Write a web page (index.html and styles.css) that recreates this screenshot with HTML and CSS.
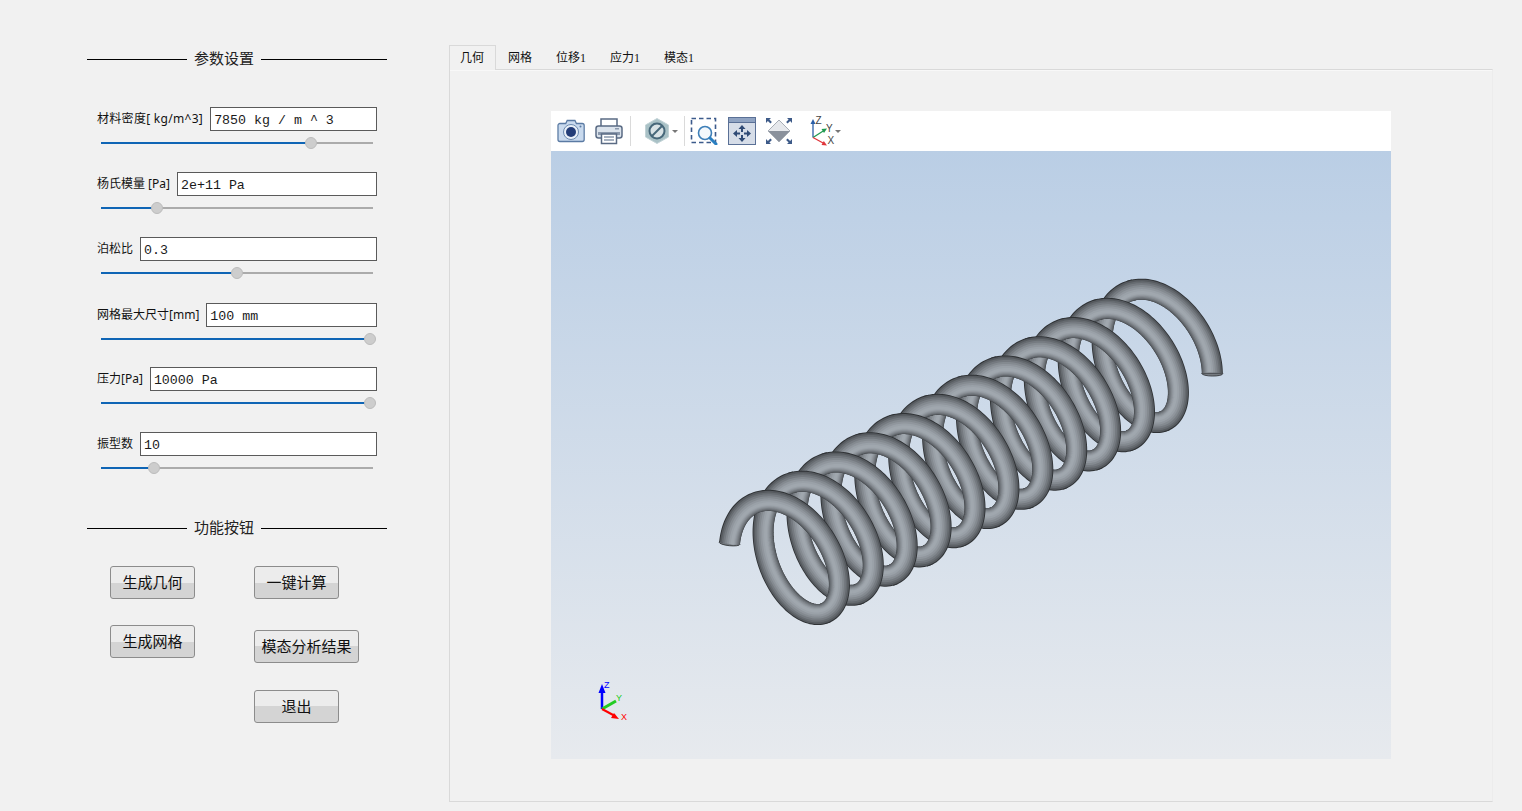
FILE: index.html
```html
<!DOCTYPE html>
<html lang="zh">
<head>
    <meta charset="UTF-8">
    <title>弹簧分析</title>
    <link rel="stylesheet" href="styles.css">
</head>
<body>
    <div class="app">
        <aside class="sidebar">
            <div class="section-title"><span>参数设置</span></div>

            <div class="param-list">
                <div class="param">
                    <div class="param-row">
                        <label class="density">材料密度[ kg/m^3]</label>
                        <div class="field">7850 kg / m ^ 3</div>
                    </div>
                    <div class="slider"><div class="slider-fill" style="width: 77.2%"></div><div class="slider-thumb" style="left: 77.2%"></div></div>
                </div>
                <div class="param">
                    <div class="param-row">
                        <label>杨氏模量 [Pa]</label>
                        <div class="field">2e+11 Pa</div>
                    </div>
                    <div class="slider"><div class="slider-fill" style="width: 20.6%"></div><div class="slider-thumb" style="left: 20.6%"></div></div>
                </div>
                <div class="param">
                    <div class="param-row">
                        <label>泊松比</label>
                        <div class="field">0.3</div>
                    </div>
                    <div class="slider"><div class="slider-fill" style="width: 50%"></div><div class="slider-thumb" style="left: 50%"></div></div>
                </div>
                <div class="param nudge">
                    <div class="param-row">
                        <label>网格最大尺寸[mm]</label>
                        <div class="field">100 mm</div>
                    </div>
                    <div class="slider"><div class="slider-fill" style="width: 99%"></div><div class="slider-thumb" style="left: 99%"></div></div>
                </div>
                <div class="param">
                    <div class="param-row">
                        <label>压力[Pa]</label>
                        <div class="field">10000 Pa</div>
                    </div>
                    <div class="slider"><div class="slider-fill" style="width: 99%"></div><div class="slider-thumb" style="left: 99%"></div></div>
                </div>
                <div class="param">
                    <div class="param-row">
                        <label>振型数</label>
                        <div class="field">10</div>
                    </div>
                    <div class="slider"><div class="slider-fill" style="width: 19.5%"></div><div class="slider-thumb" style="left: 19.5%"></div></div>
                </div>
            </div>

            <div class="section-title section-buttons"><span>功能按钮</span></div>

            <div class="button-grid">
                <div class="button-col first">
                    <button>生成几何</button>
                    <button>生成网格</button>
                </div>
                <div class="button-col second">
                    <button>一键计算</button>
                    <button class="wide">模态分析结果</button>
                    <button class="exit">退出</button>
                </div>
            </div>
        </aside>

        <main class="workspace">
            <div class="tabs">
                <div class="tab active">几何</div>
                <div class="tab">网格</div>
                <div class="tab">位移1</div>
                <div class="tab">应力1</div>
                <div class="tab">模态1</div>
            </div>
            <div class="tab-pane">
                <div class="viewer">
                    <div class="toolbar">
                        <!-- camera -->
                        <svg class="tool" width="28" height="24" viewBox="0 0 28 24">
                            <path d="M2.5 4.5h6l1.5-3h8l1.500 3h6a2 2 0 0 1 2 2v14a2 2 0 0 1-2 2h-23a2 2 0 0 1-2-2v-14a2 2 0 0 1 2-2z" transform="translate(.5 0) scale(.97 1)" fill="#c9daee" stroke="#5a7aa3" stroke-width="1.300"/>
                            <circle cx="14" cy="13" r="7.500" fill="#e9f0f8" stroke="#6d8bb0"/>
                            <circle cx="14" cy="13" r="5" fill="#233d78"/>
                            <circle cx="23.500" cy="7.500" r="1" fill="#5a7aa3"/>
                        </svg>
                        <!-- printer -->
                        <svg class="tool printer" width="28" height="28" viewBox="0 0 28 28">
                            <path d="M6 9V2h16v7" fill="#fff" stroke="#5a6b84" stroke-width="1.500"/>
                            <rect x="1" y="9" width="26" height="12" rx="2.500" fill="#dbe3ec" stroke="#5a6b84" stroke-width="1.500"/>
                            <rect x="3" y="15" width="22" height="3" fill="#8b99ad"/>
                            <rect x="20" y="11" width="4" height="1.500" fill="#8b99ad"/>
                            <rect x="6.500" y="17" width="15" height="9.500" fill="#fff" stroke="#5a6b84" stroke-width="1.500"/>
                            <path d="M9 20h10M9 23h10" stroke="#8b99ad" stroke-width="1.500"/>
                        </svg>
                        <div class="tool-sep first-sep"></div>
                        <!-- display style -->
                        <svg class="tool hex" width="24" height="26" viewBox="0 0 24 26">
                            <path d="M12 .5L23.500 7v12L12 25.500.5 19V7z" fill="#a9c1c6" stroke="#c2d3d6"/>
                            <circle cx="12" cy="13" r="7.500" fill="#d9e3e6" stroke="#47687a" stroke-width="2"/>
                            <path d="M7 18L17 8" stroke="#47687a" stroke-width="2"/>
                        </svg>
                        <span class="caret"></span>
                        <div class="tool-sep"></div>
                        <!-- zoom box -->
                        <svg class="tool zoom-box" width="28" height="28" viewBox="0 0 28 28">
                            <rect x="1.500" y="1.500" width="24" height="24" fill="none" stroke="#3c5b8c" stroke-width="1.600" stroke-dasharray="4.500 3"/>
                            <circle cx="15" cy="16" r="6.500" fill="#f3f8fc" stroke="#3e7fb8" stroke-width="1.600"/>
                            <path d="M20 21l6 6" stroke="#2a7fc1" stroke-width="3" stroke-linecap="round"/>
                        </svg>
                        <!-- pan -->
                        <svg class="tool pan" width="28" height="28" viewBox="0 0 28 28">
                            <rect x=".5" y=".5" width="27" height="27" fill="#d6dde8" stroke="#5a7096"/>
                            <rect x="1" y="1" width="26" height="4" fill="#8fa3c2"/>
                            <path d="M1 5.500h26" stroke="#5a7096"/>
                            <path d="M14 8l-3.500 4H13v3h2v-3h2.500zM14 25l-3.500-4H13v-3h2v3h2.500zM5 16.500L9 13v2.500h3v2H9V20zM23 16.500L19 13v2.500h-3v2h3V20z" fill="#2f4a75"/>
                        </svg>
                        <!-- fit all -->
                        <svg class="tool fit" width="28" height="28" viewBox="0 0 28 28">
                            <path d="M14 3L25 14H3z" fill="#e6e8ec"/>
                            <path d="M3 14h22L14 25z" fill="#8a919c"/>
                            <path d="M14 3L25 14 14 25 3 14z" fill="none" stroke="#a7adb6"/>
                            <path d="M1 1h5L4.400 2.600l2.500 2.500-1.500 1.500-2.500-2.500L1 6zM27 1h-5l1.600 1.600-2.500 2.500 1.500 1.500 2.500-2.500L27 6zM1 27h5l-1.600-1.600 2.500-2.500-1.500-1.500-2.500 2.500L1 22zM27 27h-5l1.600-1.600-2.500-2.500 1.500-1.500 2.500 2.500L27 22z" fill="#3d5a88"/>
                        </svg>
                        <!-- axis view -->
                        <svg class="tool axes" width="26" height="30" viewBox="0 0 26 30">
                            <path d="M4 21.500V6" stroke="#2c5fa8" stroke-width="1.300"/>
                            <path d="M4 3L1.500 8h5z" fill="#2c5fa8"/>
                            <path d="M4 21.500l11-7" stroke="#1f9a4f" stroke-width="1.300"/>
                            <path d="M18 12.500l-5.500.5 2.500 4z" fill="#1f9a4f"/>
                            <path d="M4 21.500l11 6" stroke="#e0343a" stroke-width="1.300"/>
                            <path d="M18 29.500l-5.500-.5 2.300-4z" fill="#e0343a"/>
                            <text x="6.500" y="8" class="axis-letter">Z</text>
                            <text x="17" y="15.500" class="axis-letter">Y</text>
                            <text x="18.500" y="28" class="axis-letter">X</text>
                        </svg>
                        <span class="caret axes-caret"></span>
                    </div>

                    <div class="view">
                        <svg id="spring" class="spring" viewBox="0 0 840 608"></svg>
                        <svg class="triad" width="40" height="50" viewBox="0 0 40 50">
                            <path d="M11 31V11" stroke="#0000ff" stroke-width="2.500"/>
                            <path d="M11 6L7.500 15h7z" fill="#0000ff"/>
                            <path d="M11 31l14-8" stroke="#22cc22" stroke-width="3"/>
                            <path d="M11 31l13 7" stroke="#ff0000" stroke-width="2"/>
                            <path d="M28 41l-8-1 3-5z" fill="#ff0000"/>
                            <text x="13" y="10" class="triad-letter z">Z</text>
                            <text x="25" y="23" class="triad-letter y">Y</text>
                            <text x="30" y="42" class="triad-letter x">X</text>
                        </svg>
                    </div>
                </div>
            </div>
        </main>
    </div>

    <script src="spring.js"></script>
</body>
</html>
```

FILE: styles.css
```css
* {
    margin: 0;
    padding: 0;
    box-sizing: border-box;
}

html, body {
    height: 100%;
    overflow: hidden;
}

body {
    background-color: #f1f1f1;
    color: #000;
    font-family: "Noto Sans", "Noto Sans CJK SC", sans-serif;
}

.app {
    display: flex;
    height: 811px;
}

/* left column */
.sidebar {
    width: 449px;
    flex: 0 0 449px;
    padding: 49px 0 0 87px;
}

.section-title {
    width: 300px;
    height: 20px;
    display: flex;
    align-items: center;
    gap: 7px;
    font-size: 15px;
    color: #222;
}

.section-title::before {
    content: '';
    width: 100px;
    height: 1px;
    background-color: #000;
}

.section-title::after {
    content: '';
    flex: 1;
    height: 1px;
    background-color: #000;
}

.section-title span {
    line-height: 18px;
    margin-bottom: 2px;
}

.section-buttons {
    margin-top: 49px;
}

.param-list {
    display: flex;
    flex-direction: column;
    gap: 28px;
    width: 290px;
    margin-top: 38px;
}

.param.nudge {
    margin-top: 1px;
    margin-bottom: -1px;
}

.param-row {
    display: flex;
    align-items: center;
    gap: 7px;
    padding-left: 10px;
    height: 24px;
}

.param-row label {
    font-size: 12px;
    white-space: nowrap;
    color: #111;
    position: relative;
    top: -1px;
}

.param-row label.density {
    letter-spacing: .3px;
}

.field {
    flex: 1;
    height: 24px;
    border: 1px solid #5a5a5a;
    background-color: #fff;
    color: #1a1a1a;
    font-family: "Liberation Mono", "Noto Sans CJK SC", monospace;
    font-size: 13.300px;
    line-height: 25px;
    padding-left: 3px;
    white-space: pre;
}

.slider {
    position: relative;
    width: 272px;
    height: 2px;
    margin: 11px 0 0 14px;
    background-color: #ababab;
}

.slider-fill {
    height: 100%;
    background-color: #0f65b5;
}

.slider-thumb {
    position: absolute;
    top: -5px;
    width: 12px;
    height: 12px;
    margin-left: -6px;
    border-radius: 50%;
    background-color: #cdcdcd;
    border: 1px solid #bcbcbc;
}

.button-grid {
    display: flex;
    margin-top: 28px;
}

.button-col {
    display: flex;
    flex-direction: column;
    align-items: flex-start;
}

.button-col.first {
    margin-left: 23px;
    width: 144px;
    gap: 26px;
}

.button-col.second .wide {
    margin-top: 31px;
}

.button-col.second .exit {
    margin-top: 27px;
}

button {
    width: 85px;
    height: 33px;
    padding-bottom: 2px;
    border: 1px solid #8c8c8c;
    border-radius: 3px;
    background: linear-gradient(to bottom, #ececec 0, #ececec 50%, #d4d4d4 50%, #d4d4d4 100%);
    font-family: "Noto Sans CJK SC", sans-serif;
    font-size: 15px;
    color: #111;
    cursor: pointer;
}

button.wide {
    width: 105px;
}

/* right column */
.workspace {
    flex: 0 0 1044px;
    padding-top: 45px;
}

.tabs {
    display: flex;
    height: 24px;
    font-family: "Liberation Serif", "Noto Sans CJK SC", serif;
    font-size: 12px;
}

.tab {
    line-height: 26px;
    padding: 0 12px;
    color: #111;
}

.tab.active {
    background-color: #f1f1f1;
    border: 1px solid #d9d9d9;
    border-bottom: none;
    padding: 0 11px 0 10px;
    line-height: 25px;
    height: 25px;
    z-index: 1;
}

.tab-pane {
    height: 733px;
    border: 1px solid #d9d9d9;
    border-right-color: #ececec;
    padding: 41px 0 0 101px;
    box-shadow: inset 0 1px 0 #f8f8f8;
}

.viewer {
    width: 840px;
}

.toolbar {
    display: flex;
    align-items: center;
    height: 40px;
    background-color: #fff;
    padding-left: 6px;
}

.tool {
    flex: none;
    display: block;
}

.tool.printer { margin-left: 10px; }
.tool.pan { margin-left: 10px; }
.tool.fit { margin-left: 9px; }
.tool.axes { margin-left: 16px; }

.tool-sep {
    flex: none;
    width: 1px;
    height: 30px;
    background-color: #dadada;
    margin: 0 5px 0 6px;
}

.tool-sep.first-sep {
    margin: 0 14px 0 7px;
}

.caret {
    flex: none;
    width: 0;
    height: 0;
    margin-left: 3px;
    border-left: 3px solid transparent;
    border-right: 3px solid transparent;
    border-top: 3px solid #777;
}

.axes-caret {
    margin-left: 0;
}

.axis-letter {
    font-family: "Liberation Sans", sans-serif;
    font-size: 10px;
    fill: #444;
}

.view {
    position: relative;
    height: 608px;
    background: linear-gradient(to bottom, #bacee5 0%, #e7eaee 100%);
}

.spring {
    display: block;
    width: 840px;
    height: 608px;
}

.triad {
    position: absolute;
    left: 40px;
    bottom: 31px;
}

.triad-letter {
    font-family: "Liberation Sans", sans-serif;
    font-size: 9px;
}

.triad-letter.z { fill: #0000ff; }
.triad-letter.y { fill: #22cc22; }
.triad-letter.x { fill: #ff0000; }
```

FILE: spring.js
```js
// Draws the helical spring in the 3D view as stacked strokes, back strands first
const svg = document.getElementById('spring');
const NS = 'http://www.w3.org/2000/svg';

// helix projection, in view coordinates
const center = [781 - 551, 563 - 151];
const pitch = [33.9, -19.2];
const major = [-26.5, -60];
const minor = [38, -15];
const START = -0.95;
const END = 22 * Math.PI + 2.3;

// outer to inner: width, colour. Inner layers sit a bit closer to the axis,
// which keeps the outer side of each coil darker.
const layers = [
    [21, '#2f3235'],
    [20, '#565a5f'],
    [17.5, '#666b70'],
    [15, '#757a80'],
    [12, '#848a90'],
    [9, '#90969d'],
    [6, '#9aa1a8'],
    [3, '#a0a7ae']
];

function point(t, shrink) {
    const k = t / (2 * Math.PI);
    return [
        center[0] + k * pitch[0] + (Math.cos(t) * major[0] + Math.sin(t) * minor[0]) * shrink,
        center[1] + k * pitch[1] + (Math.cos(t) * major[1] + Math.sin(t) * minor[1]) * shrink
    ];
}

// stagger = inner layers run past the outer ones at a joint, so no seam shows
function drawStrand(from, to, staggerFrom, staggerTo) {
    layers.forEach((layer, i) => {
        const a = from - (staggerFrom ? i * 0.012 : 0);
        const b = to + (staggerTo ? i * 0.012 : 0);
        const steps = Math.ceil((b - a) / 0.04);
        const shrink = 1 - i * 0.008;
        const pts = [];
        for (let s = 0; s <= steps; s++) {
            const p = point(a + (b - a) * s / steps, shrink);
            pts.push(p[0].toFixed(2) + ',' + p[1].toFixed(2));
        }
        const line = document.createElementNS(NS, 'polyline');
        line.setAttribute('points', pts.join(' '));
        line.setAttribute('fill', 'none');
        line.setAttribute('stroke', layer[1]);
        line.setAttribute('stroke-width', layer[0]);
        svg.appendChild(line);
    });
}

function drawEnd(t) {
    const p = point(t, 1);
    const q = point(t + 0.02, 1);
    const angle = Math.atan2(q[1] - p[1], q[0] - p[0]) * 180 / Math.PI + 90;
    const cap = document.createElementNS(NS, 'ellipse');
    cap.setAttribute('rx', 10.5);
    cap.setAttribute('ry', 2.5);
    cap.setAttribute('fill', '#757a80');
    cap.setAttribute('stroke', '#2f3235');
    cap.setAttribute('stroke-width', 0.8);
    cap.setAttribute('transform', `translate(${p[0]} ${p[1]}) rotate(${angle})`);
    svg.appendChild(cap);
}

const TURN = 2 * Math.PI;
const OVERLAP = 0.06;
const turns = 11;

// back strands, far end first
for (let n = turns - 1; n >= 0; n--) {
    drawStrand(n * TURN + Math.PI - OVERLAP, (n + 1) * TURN + 0.15, false, false);
}

// front strands, far end first, so nearer coils lie over farther ones
drawEnd(END);
drawStrand(turns * TURN + 0.05, END, true, false);
for (let n = turns - 1; n >= 1; n--) {
    drawStrand(n * TURN + 0.05, n * TURN + Math.PI + OVERLAP, true, true);
}
drawEnd(START);
drawStrand(START, Math.PI + OVERLAP, false, true);
```
